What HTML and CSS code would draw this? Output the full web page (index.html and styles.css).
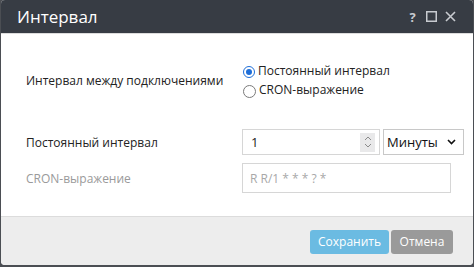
FILE: index.html
```html
<!DOCTYPE html>
<html lang="ru">
<head>
    <meta charset="UTF-8">
    <title>Интервал</title>
    <link rel="stylesheet" href="styles.css">
</head>
<body>
    <div class="dialog">
        <div class="titlebar">
            <span class="title">Интервал</span>
            <div class="title-tools">
                <span class="tool help">?</span>
                <span class="tool">
                    <svg width="11" height="11" viewBox="0 0 11 11"><rect x="0.75" y="0.75" width="9.5" height="9.5" fill="none" stroke="#c8cbd0" stroke-width="1.5"/></svg>
                </span>
                <span class="tool">
                    <svg width="11" height="11" viewBox="0 0 11 11"><path d="M1 1 L10 10 M10 1 L1 10" stroke="#c8cbd0" stroke-width="1.6"/></svg>
                </span>
            </div>
        </div>

        <div class="content">
            <div class="form-row radio-row">
                <div class="label">Интервал между подключениями</div>
                <div class="radios">
                    <div class="radio-item">
                        <span class="radio checked"></span>
                        <span>Постоянный интервал</span>
                    </div>
                    <div class="radio-item">
                        <span class="radio"></span>
                        <span>CRON-выражение</span>
                    </div>
                </div>
            </div>

            <div class="form-row interval-row">
                <div class="label">Постоянный интервал</div>
                <div class="fields">
                    <div class="number-input">
                        <span class="value">1</span>
                        <span class="spinner">
                            <svg width="8" height="14" viewBox="0 0 8 14"><path d="M1 5 L4 2 L7 5 M1 9 L4 12 L7 9" fill="none" stroke="#8a8a8a" stroke-width="1"/></svg>
                        </span>
                    </div>
                    <div class="select">
                        <span>Минуты</span>
                        <svg width="9" height="6" viewBox="0 0 9 6"><path d="M1 1 L4.5 4.5 L8 1" fill="none" stroke="#111" stroke-width="1.6"/></svg>
                    </div>
                </div>
            </div>

            <div class="form-row cron-row">
                <div class="label disabled">CRON-выражение</div>
                <div class="text-input">R R/1 * * * ? *</div>
            </div>
        </div>

        <div class="footer">
            <button class="btn btn-save">Сохранить</button>
            <button class="btn btn-cancel">Отмена</button>
        </div>
    </div>
</body>
</html>
```

FILE: styles.css
```css
body {
    margin: 0;
    background: #4b4e53;
    font-family: 'Open Sans', 'Noto Sans', sans-serif;
    color: #222;
}

.dialog {
    margin: 0 1px;
    width: 472px;
    height: 265px;
    background: #fff;
    border-radius: 4px;
    overflow: hidden;
    display: flex;
    flex-direction: column;
}

.titlebar {
    height: 33px;
    background: #373c44;
    border-bottom: 1px solid #dcdcdc;
    display: flex;
    align-items: center;
    justify-content: space-between;
    padding: 0 17px 0 16px;
}

.title {
    color: #fff;
    font-size: 17px;
}

.title-tools {
    display: flex;
    align-items: center;
    gap: 8px;
}

.tool {
    display: flex;
    align-items: center;
    justify-content: center;
    width: 11px;
    height: 14px;
}

.help {
    color: #c8cbd0;
    font-weight: bold;
    font-size: 13px;
}

.content {
    flex: 1;
    padding: 27px 0 0 25px;
}

.form-row {
    display: flex;
    align-items: center;
}

.label {
    width: 216px;
    font-size: 12px;
    color: #222;
}

.label.disabled {
    color: #9a9a9a;
}

.radio-row {
    height: 38px;
}

.radio-item {
    display: flex;
    align-items: center;
    gap: 3px;
    height: 19px;
    font-size: 12px;
}

.radio {
    width: 11px;
    height: 11px;
    border: 1px solid #7a7a7a;
    border-radius: 50%;
    margin-top: 3px;
    margin-left: 1px;
    box-sizing: content-box;
    position: relative;
}

.radio.checked {
    border: 1.5px solid #1e6ed8;
    width: 10px;
    height: 10px;
}

.radio.checked::after {
    content: "";
    position: absolute;
    left: 2px;
    top: 2px;
    width: 6px;
    height: 6px;
    border-radius: 50%;
    background: #1e6ed8;
}

.interval-row {
    margin-top: 30px;
    height: 26px;
}

.fields {
    display: flex;
    gap: 3px;
}

.number-input {
    width: 124px;
    height: 24px;
    border: 1px solid #d6d6d6;
    display: flex;
    align-items: center;
    justify-content: space-between;
    padding: 0 4px 0 8px;
    box-sizing: content-box;
}

.number-input .value {
    font-size: 13px;
    color: #222;
}

.spinner {
    width: 15px;
    height: 19px;
    background: #e9e9ea;
    display: flex;
    align-items: center;
    justify-content: center;
}

.select {
    height: 26px;
    width: 81px;
    border: 1px solid #c8c8c8;
    display: flex;
    align-items: center;
    justify-content: space-between;
    padding: 0 7px 0 3px;
    box-sizing: border-box;
    font-size: 13px;
    color: #111;
}

.cron-row {
    margin-top: 8px;
    height: 30px;
}

.text-input {
    width: 209px;
    height: 30px;
    border: 1px solid #d6d6d6;
    box-sizing: border-box;
    display: flex;
    align-items: center;
    padding-left: 7px;
    font-size: 12px;
    color: #a8a8a8;
}

.footer {
    height: 48px;
    background: #ededed;
    border-top: 1px solid #dcdcdc;
    display: flex;
    align-items: center;
    justify-content: flex-end;
    gap: 2px;
    padding-right: 20px;
}

.btn {
    height: 24px;
    border: none;
    border-radius: 3px;
    color: #fff;
    font-family: 'Open Sans', 'Noto Sans', sans-serif;
    font-size: 12px;
    padding: 0;
    margin-top: 1px;
}

.btn-save {
    width: 79px;
    background: #6bbbe2;
}

.btn-cancel {
    width: 62px;
    background: #9a9a9a;
}
```
